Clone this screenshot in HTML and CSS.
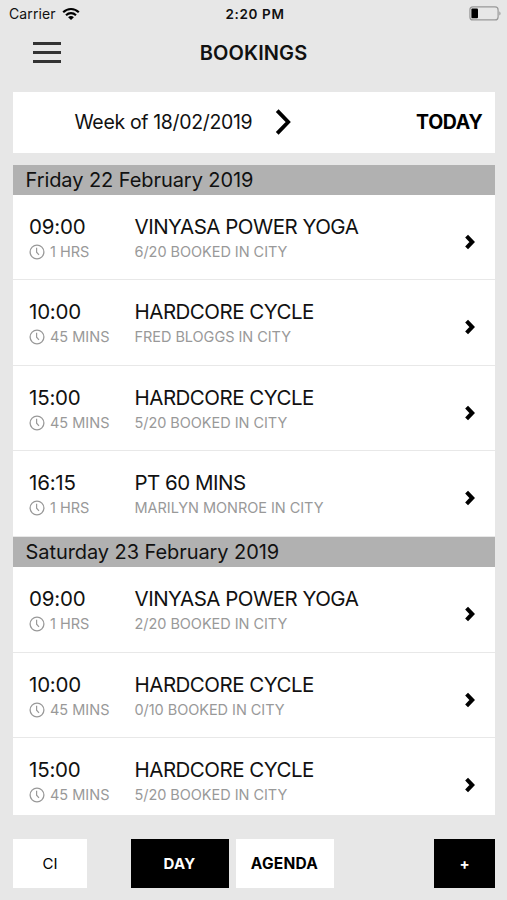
FILE: index.html
```html
<!DOCTYPE html>
<html lang="en">
<head>
  <meta charset="UTF-8" />
  <title>Bookings</title>
  <link rel="stylesheet" href="styles.css">
</head>
<body>

<!-- Shared icons -->
<svg class="icons" width="0" height="0">
  <symbol id="clock" viewBox="0 0 16 16">
    <circle cx="8" cy="8" r="6.9" fill="none" stroke="#999" stroke-width="1.3" />
    <path d="M7.6 3.8V8.2L10 10.8" fill="none" stroke="#999" stroke-width="1.2" />
  </symbol>
  <symbol id="chevron" viewBox="0 0 12 16">
    <path d="M2.6 2.2L8.2 8L2.6 13.8" fill="none" stroke="#000" stroke-width="4" />
  </symbol>
</svg>

<!-- Status bar -->
<div class="status">
  <div class="carrier">
    <span>Carrier</span>
    <svg width="18" height="14" viewBox="0 0 18 14">
      <path d="M1.2 5.2C5.6 .9 12.4 .9 16.8 5.2" fill="none" stroke="#000" stroke-width="2.2" />
      <path d="M4 8.2C6.9 5.4 11.1 5.4 14 8.2" fill="none" stroke="#000" stroke-width="2.1" />
      <path d="M6.1 10.2C7.8 8.7 10.2 8.7 11.9 10.2L9 13.1Z" fill="#000" />
    </svg>
  </div>
  <div class="clock">2:20 PM</div>
  <svg class="battery" width="32" height="15" viewBox="0 0 32 15">
    <rect x=".9" y=".9" width="28.2" height="13" rx="3" fill="none" stroke="#999" stroke-width="1.2" />
    <rect x="2.4" y="2.6" width="6.6" height="9.6" rx="1" fill="#000" />
    <path d="M30.3 5.2C32 6 32 8.8 30.3 9.6Z" fill="#999" />
  </svg>
</div>

<!-- Title bar -->
<div class="navbar">
  <div class="menu"><i></i><i></i><i></i></div>
  <h1>BOOKINGS</h1>
</div>

<!-- Week picker -->
<div class="week">
  <span class="week-label">Week of 18/02/2019</span>
  <svg class="week-next" width="18" height="26" viewBox="0 0 18 26">
    <path d="M2.2 1.6L13.2 13L2.2 24.4" fill="none" stroke="#000" stroke-width="3.8" />
  </svg>
  <span class="today">TODAY</span>
</div>

<!-- Bookings list -->
<div class="list">
  <h2>Friday 22 February 2019</h2>
  <div class="row">
    <div class="when">
      <div class="time">09:00</div>
      <div class="sub"><svg><use href="#clock" /></svg>1 HRS</div>
    </div>
    <div class="what">
      <div class="name">VINYASA POWER YOGA</div>
      <div class="sub">6/20 BOOKED IN CITY</div>
    </div>
    <svg class="arrow"><use href="#chevron" /></svg>
  </div>
  <div class="row">
    <div class="when">
      <div class="time">10:00</div>
      <div class="sub"><svg><use href="#clock" /></svg>45 MINS</div>
    </div>
    <div class="what">
      <div class="name">HARDCORE CYCLE</div>
      <div class="sub">FRED BLOGGS IN CITY</div>
    </div>
    <svg class="arrow"><use href="#chevron" /></svg>
  </div>
  <div class="row">
    <div class="when">
      <div class="time">15:00</div>
      <div class="sub"><svg><use href="#clock" /></svg>45 MINS</div>
    </div>
    <div class="what">
      <div class="name">HARDCORE CYCLE</div>
      <div class="sub">5/20 BOOKED IN CITY</div>
    </div>
    <svg class="arrow"><use href="#chevron" /></svg>
  </div>
  <div class="row">
    <div class="when">
      <div class="time">16:15</div>
      <div class="sub"><svg><use href="#clock" /></svg>1 HRS</div>
    </div>
    <div class="what">
      <div class="name">PT 60 MINS</div>
      <div class="sub">MARILYN MONROE IN CITY</div>
    </div>
    <svg class="arrow"><use href="#chevron" /></svg>
  </div>

  <h2>Saturday 23 February 2019</h2>
  <div class="row">
    <div class="when">
      <div class="time">09:00</div>
      <div class="sub"><svg><use href="#clock" /></svg>1 HRS</div>
    </div>
    <div class="what">
      <div class="name">VINYASA POWER YOGA</div>
      <div class="sub">2/20 BOOKED IN CITY</div>
    </div>
    <svg class="arrow"><use href="#chevron" /></svg>
  </div>
  <div class="row">
    <div class="when">
      <div class="time">10:00</div>
      <div class="sub"><svg><use href="#clock" /></svg>45 MINS</div>
    </div>
    <div class="what">
      <div class="name">HARDCORE CYCLE</div>
      <div class="sub">0/10 BOOKED IN CITY</div>
    </div>
    <svg class="arrow"><use href="#chevron" /></svg>
  </div>
  <div class="row">
    <div class="when">
      <div class="time">15:00</div>
      <div class="sub"><svg><use href="#clock" /></svg>45 MINS</div>
    </div>
    <div class="what">
      <div class="name">HARDCORE CYCLE</div>
      <div class="sub">5/20 BOOKED IN CITY</div>
    </div>
    <svg class="arrow"><use href="#chevron" /></svg>
  </div>
</div>

<!-- Bottom buttons -->
<div class="footer">
  <button class="ci">CI</button>
  <button class="day dark">DAY</button>
  <button class="agenda">AGENDA</button>
  <button class="add dark">+</button>
</div>

</body>
</html>
```
FILE: styles.css
```css
* {
  box-sizing: border-box;
}
body {
  margin: 0;
  height: 900px;
  overflow: hidden;
  background: #e7e7e7;
  color: #111;
  font-family: Inter, "Liberation Sans", sans-serif;
}
.icons {
  display: block;
}

/* status bar */
.status {
  display: grid;
  grid-template-columns: 1fr auto 1fr;
  align-items: center;
  height: 27px;
  padding: 0 6px 0 9px;
}
.carrier {
  display: flex;
  align-items: center;
  gap: 6px;
  font-size: 14px;
  letter-spacing: 0.1px;
}
.clock {
  font-size: 13.5px;
  font-weight: 600;
  letter-spacing: 0.65px;
}
.battery {
  justify-self: end;
}

/* title bar */
.navbar {
  display: grid;
  grid-template-columns: 1fr auto 1fr;
  align-items: center;
  height: 51px;
  padding: 0 33px;
}
.menu {
  display: flex;
  flex-direction: column;
  gap: 6px;
  width: 28px;
}
.menu i {
  height: 3px;
  background: #333;
}
h1 {
  margin: 0;
  font-size: 20px;
  font-weight: 600;
  letter-spacing: 0.1px;
}

/* week picker */
.week {
  display: flex;
  align-items: center;
  height: 61px;
  margin: 13.5px 12px 12px 13px;
  padding: 0 12.5px 0 61.5px;
  background: #fff;
}
.week-label {
  font-size: 19.5px;
  letter-spacing: -0.35px;
}
.week-next {
  margin-left: 23px;
}
.today {
  margin-left: auto;
  font-size: 19.5px;
  font-weight: 700;
  letter-spacing: -0.3px;
  color: #000;
}

/* bookings list */
.list {
  height: 650px;
  margin: 0 12px 0 13px;
  overflow: hidden;
  background: #fff;
}
h2 {
  margin: 0;
  height: 30.25px;
  padding-left: 12.5px;
  background: #b1b1b1;
  font-size: 20px;
  font-weight: 400;
  line-height: 31px;
  letter-spacing: -0.07px;
}
.row {
  display: flex;
  height: 85.5px;
  padding: 20px 19px 0 16px;
  border-bottom: 1.5px solid #e8e8e8;
}
.when {
  width: 105.5px;
}
.time,
.name {
  font-size: 20.5px;
  line-height: 24px;
}
.time {
  letter-spacing: -0.2px;
}
.name {
  letter-spacing: -0.5px;
}
.sub {
  display: flex;
  align-items: center;
  margin-top: 3px;
  font-size: 14.5px;
  line-height: 20px;
  color: #999;
}
.what .sub {
  letter-spacing: -0.05px;
}
.sub svg {
  width: 16px;
  height: 16px;
  margin-right: 5.5px;
  margin-left: -0.5px;
}
.arrow {
  width: 12px;
  height: 16px;
  margin: 19px 0 0 auto;
}

/* bottom buttons */
.footer {
  display: flex;
  height: 49px;
  margin: 24px 12px 0 13px;
}
button {
  padding: 0;
  border: 0;
  border-radius: 0;
  background: #fff;
  color: #000;
  font-family: inherit;
  font-size: 15px;
  font-weight: 700;
}
.dark {
  background: #000;
  color: #fff;
}
.ci {
  width: 74px;
  font-weight: 400;
}
.day {
  width: 98px;
  margin-left: 43.5px;
  letter-spacing: 0.2px;
}
.agenda {
  width: 98px;
  margin-left: 7px;
  font-size: 15.5px;
  letter-spacing: 0.25px;
}
.add {
  width: 61px;
  margin-left: auto;
}
```
